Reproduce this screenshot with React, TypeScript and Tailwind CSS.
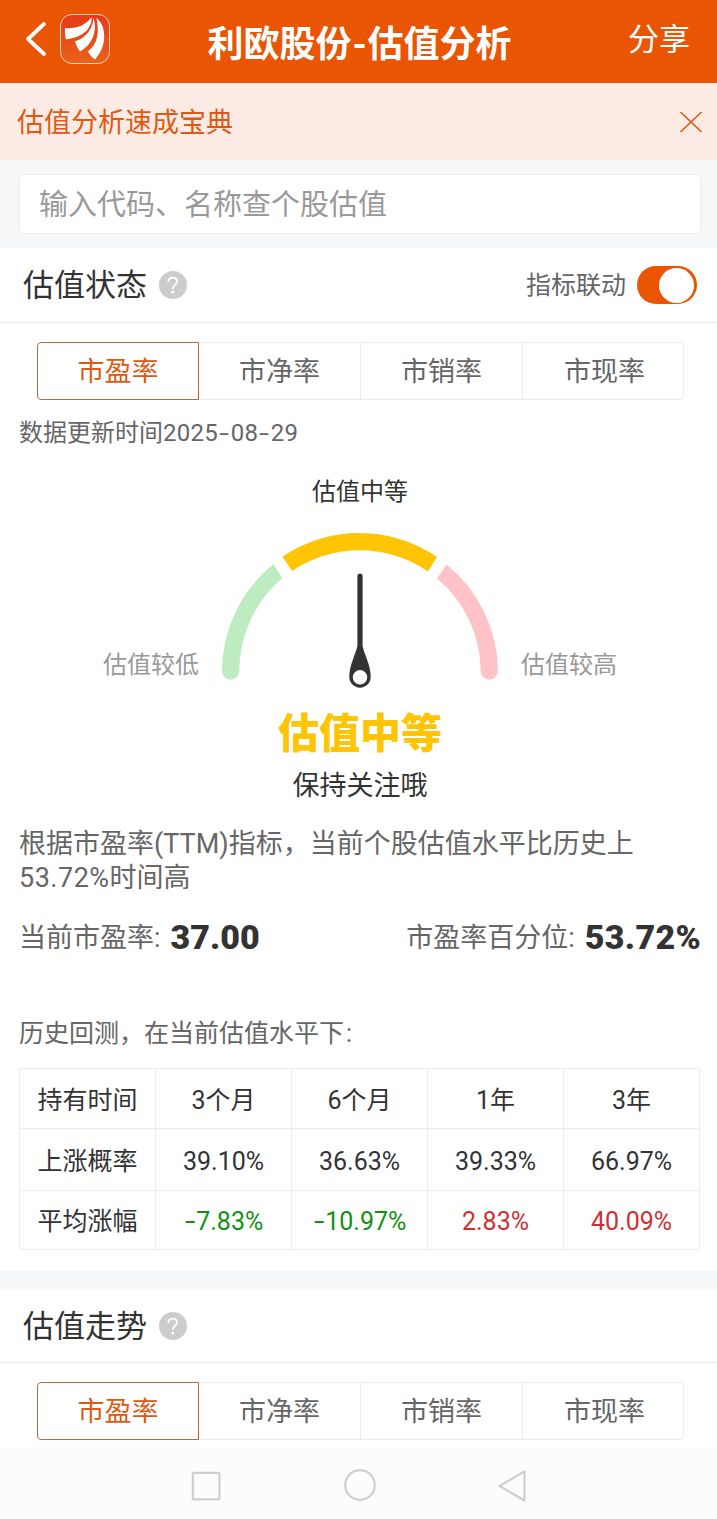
import { useState } from "react";

const tabs = ["市盈率", "市净率", "市销率", "市现率"];

const rows = [
  { label: "上涨概率", values: ["39.10%", "36.63%", "39.33%", "66.97%"] },
  { label: "平均涨幅", values: ["-7.83%", "-10.97%", "2.83%", "40.09%"], colored: true },
];

function Logo() {
  return (
    <svg className="ml-[13px] size-[50px] shrink-0" viewBox="0 0 50 50">
      <defs>
        <linearGradient id="logo" x1="0" y1="0" x2="0" y2="1">
          <stop offset="0" stopColor="#e63a18" />
          <stop offset="1" stopColor="#ea6218" />
        </linearGradient>
      </defs>
      <rect x="0.5" y="0.5" width="49" height="49" rx="11.5" fill="url(#logo)" stroke="#fbd3b4" />
      <g fill="#fff">
        <path d="M5 14C15 15 25 12 31.500 3.200C32.500 14 23 23.500 5.800 25.300C5 22 4.700 18 5 14Z" />
        <path d="M15 27.300C25 24.500 32.500 16 33.600 4C37.500 17 33 30 20 37.500C17.500 34.500 16 31 15 27.300Z" />
        <path d="M36.300 3.800C42.500 8.500 44.300 16 44.200 23C44 32 40.500 39 35 45.500C32 43.500 29.500 40.500 28 37.200C38 30 39.500 18 36.300 3.800Z" />
      </g>
    </svg>
  );
}

function Help() {
  return (
    <svg className="ml-3 size-7" viewBox="0 0 28 28" fill="none">
      <circle cx="14" cy="14" r="14" fill="#ccc" />
      <path d="M9.300 11C9.300 8.200 11.200 6.600 13.700 6.600C16.300 6.600 18 8.200 18 10.600C18 13.600 13.700 14 13.700 18" stroke="#fff" strokeWidth="1.800" />
      <circle cx="13.700" cy="21.200" r="1.400" fill="#fff" />
    </svg>
  );
}

function Tabs() {
  const [active, setActive] = useState(0);

  return (
    <div className="mt-[19px] mr-[33px] ml-[37px] grid h-[58px] grid-cols-[162px_162px_162px_161px] text-[27px]">
      {tabs.map((tab, i) => (
        <button
          key={tab}
          onClick={() => setActive(i)}
          className={
            i === active
              ? "rounded-l-[4px] border border-[#b96a3c] pt-[3px] text-[#dc5a14]"
              : "border-y border-r border-[#ececec] pt-0.5 text-[#666] last:rounded-r-[4px] last:pl-[3px]"
          }
        >
          {tab}
        </button>
      ))}
    </div>
  );
}

function Gauge() {
  return (
    <svg className="h-[170px] w-[300px]" viewBox="210 525 300 170">
      <path d="M222 671A138 138 0 0 1 273.500 564L282.300 578.300A121 121 0 0 0 239.300 671A8.650 8.650 0 0 1 222 671Z" fill="#bdecc0" />
      <path d="M282.500 556.500A138 138 0 0 1 437 557L428 571.500A121 121 0 0 0 292 571Z" fill="#ffc505" />
      <path d="M446.500 564.500A138 138 0 0 1 498 671A8.650 8.650 0 0 1 480.700 671A121 121 0 0 0 437 578.500Z" fill="#ffc2c7" />
      <path
        fillRule="evenodd"
        d="M357.400 576A2.600 2.600 0 0 1 362.600 576V646C364.500 655 370.700 665 370.700 677A10.700 10.700 0 0 1 349.300 677C349.300 665 355.500 655 357.400 646ZM352.800 677.300A7.200 7.200 0 1 0 367.200 677.300A7.200 7.200 0 1 0 352.800 677.300Z"
        fill="#333"
      />
    </svg>
  );
}

// Roboto's hyphen is narrow, so it gets stretched
function Dash() {
  return <span className="inline-block w-[12.500px] scale-x-150 text-center">-</span>;
}

function Change({ value }: { value: string }) {
  if (value.startsWith("-")) {
    return (
      <span className="text-[#0f930f]">
        <Dash />
        {value.slice(1)}
      </span>
    );
  }
  return <span className="text-[#cf3030]">{value}</span>;
}

export default function App() {
  const [linked, setLinked] = useState(true);

  return (
    <div lang="zh-CN" className="flex h-[1519px] w-[717px] flex-col overflow-hidden bg-white font-[Roboto,'Noto_Sans_CJK_SC',sans-serif] text-[#333]">
      <header className="grid h-[83px] shrink-0 grid-cols-[200px_1fr_200px] bg-[#ea5504] text-white">
        <div className="flex items-center pb-[5px] pl-[25px]">
          <svg className="h-9 w-[22px]" viewBox="0 0 22 36" fill="none" stroke="#fff" strokeWidth="3.800" strokeLinecap="round" strokeLinejoin="round">
            <path d="M19 3L3 18L19 33" />
          </svg>
          <Logo />
        </div>
        <h1 className="flex items-center justify-center pt-[7px] pl-0.5 text-[36px] font-bold whitespace-nowrap">
          利欧股份<span className="inline-block w-4 text-center">-</span>估值分析
        </h1>
        <div className="flex items-center justify-end pr-[27px] pb-0.5 text-[31px]">分享</div>
      </header>

      <div className="flex h-[77px] shrink-0 items-center justify-between bg-[#fcebe4] pr-[14px] pl-[17px] text-[27px] text-[#dc5a14]">
        <span className="pt-1">估值分析速成宝典</span>
        <svg className="size-6" viewBox="0 0 24 24" stroke="currentColor" strokeWidth="1.700">
          <path d="M1.500 2L22.500 22M22.500 2L1.500 22" />
        </svg>
      </div>

      <div className="h-[88px] shrink-0 bg-[#f6f7f9] px-[19px] pt-[14px]">
        <div className="flex h-[60px] w-[682px] items-center rounded-[5px] border border-[#ececec] bg-white pt-1 pl-[19px] text-[29px] text-[#999]">
          输入代码、名称查个股估值
        </div>
      </div>

      <section className="h-[1023px] shrink-0">
        <div className="flex h-[75px] items-center border-b border-[#ececec] pr-5 pb-px pl-[23px]">
          <h2 className="pt-[3px] text-[31px]">估值状态</h2>
          <Help />
          <span className="mr-[11px] ml-auto pt-[3px] text-[25px] text-[#666]">指标联动</span>
          <button
            onClick={() => setLinked(!linked)}
            className={
              linked
                ? "mt-px flex h-[38px] w-[60px] items-center justify-end rounded-full bg-[#ea5504] pr-[3px]"
                : "mt-px flex h-[38px] w-[60px] items-center rounded-full bg-[#ccc] pl-[3px]"
            }
          >
            <span className="size-[35px] rounded-full bg-white" />
          </button>
        </div>
        <Tabs />

        <p className="mt-[15px] ml-[19px] text-[24px] leading-9 text-[#666]">
          数据更新时间
          <span className="tracking-[0.300px]">
            2025
            <Dash />
            08
            <Dash />
            29
          </span>
        </p>

        <div className="mt-[23px] flex flex-col items-center pl-[3px]">
          <p className="text-[24px] leading-9">估值中等</p>
          <div className="mt-[15px] flex items-end gap-[11px] text-[24px] leading-9 text-[#999]">
            <span className="mb-3 w-[96px]">估值较低</span>
            <Gauge />
            <span className="mb-3 w-[96px]">估值较高</span>
          </div>
          <p className="mt-3 text-[41px] leading-[54px] font-black text-[#ffc505]">估值中等</p>
          <p className="mt-[7px] text-[27px] leading-9">保持关注哦</p>
        </div>

        <p className="mt-[23px] ml-[19px] text-[27px] leading-[34px] text-[#666]">
          根据市盈率(TTM)指标，当前个股估值水平比历史上
          <br />
          <span className="tracking-[0.500px]">53.72%</span>时间高
        </p>

        <div className="mt-[21px] flex h-[44px] items-center justify-between pr-4 pl-[19px] text-[27px] text-[#666]">
          <div className="flex items-center">
            当前市盈率:<b className="ml-[10px] pb-0.5 text-[34px] font-black text-[#333]">37.00</b>
          </div>
          <div className="flex items-center">
            市盈率百分位:<b className="ml-[10px] pb-0.5 text-[34px] font-black tracking-[0.300px] text-[#333]">53.72%</b>
          </div>
        </div>

        <p className="mt-[56px] ml-[19px] text-[25px] leading-9 text-[#666]">
          历史回测，在当前估值水平下<span className="ml-0.5">:</span>
        </p>

        <table className="mt-4 ml-[19px] w-[681px] table-fixed border-collapse text-center text-[25px]">
          <tbody>
            <tr className="h-[60px]">
              {["持有时间", "3个月", "6个月", "1年", "3年"].map((h) => (
                <td key={h} className="border border-[#ececec] p-0 pt-1">{h}</td>
              ))}
            </tr>
            {rows.map((row) => (
              <tr key={row.label} className={row.colored ? "h-[59px]" : "h-[62px]"}>
                <td className="border border-[#ececec] p-0 pt-1">{row.label}</td>
                {row.values.map((v) => (
                  <td key={v} className="border border-[#ececec] p-0 pt-1">
                    {row.colored ? <Change value={v} /> : v}
                  </td>
                ))}
              </tr>
            ))}
          </tbody>
        </table>
      </section>

      <section className="h-[176px] shrink-0 border-t-[19px] border-[#f6f7f9]">
        <div className="flex h-[73px] items-center border-b border-[#ececec] pl-[23px]">
          <h2 className="pt-[3px] text-[31px]">估值走势</h2>
          <Help />
        </div>
        <Tabs />
      </section>

      <nav className="flex h-[72px] shrink-0 justify-center bg-[#fcfcfc]">
        <svg className="h-[72px] w-[360px]" viewBox="179 1447 360 72" fill="none" stroke="#cfcfcf" strokeWidth="2.200" strokeLinejoin="round">
          <rect x="192.800" y="1472.800" width="26.600" height="26.600" rx="1" />
          <circle cx="360" cy="1485" r="14.800" />
          <path d="M499.500 1486L524.500 1471.500V1500.500Z" />
        </svg>
      </nav>
    </div>
  );
}
